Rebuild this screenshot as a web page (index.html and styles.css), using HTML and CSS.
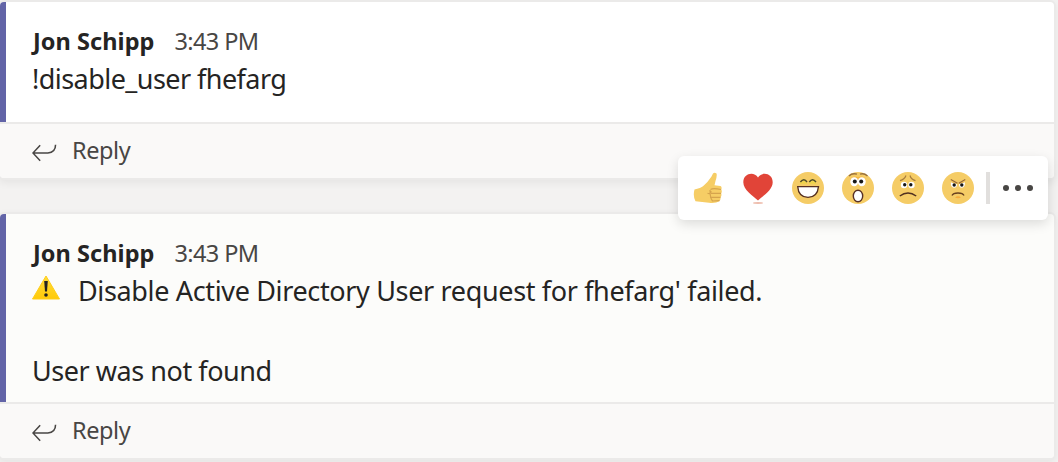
FILE: index.html
```html
<!DOCTYPE html>
<html lang="en">
<head>
<meta charset="utf-8">
<title>Conversation</title>
<link rel="stylesheet" href="styles.css">
</head>
<body>
<main class="thread">
  <article class="card">
    <section class="message">
      <header class="meta"><span class="author">Jon Schipp</span><time class="time">3:43 PM</time></header>
      <p class="line command">!disable_user fhefarg</p>
    </section>
    <footer class="reply">
      <svg class="reply-icon" viewBox="0 0 26 18"><path d="M8.500 1 1 9l7.500 8M1 9h15.500Q24.500 8.500 24.500.5"/></svg>
      <span class="reply-label">Reply</span>
    </footer>
  </article>
  <article class="card card-hover">
    <section class="message">
      <header class="meta"><span class="author">Jon Schipp</span><time class="time">3:43 PM</time></header>
      <p class="line alert">
        <svg class="warning" viewBox="0 0 28 25">
          <defs><linearGradient id="warn" x1="0" y1="0" x2="0" y2="1"><stop offset="0" stop-color="#ffdc3c"/><stop offset="1" stop-color="#ffca08"/></linearGradient></defs>
          <path d="M14 1 27.500 24H.5Z" fill="url(#warn)" stroke="#ffcd18" stroke-linejoin="round"/>
          <path d="M12.200 6h3.600l-.8 10.500h-2Z" fill="#222"/><circle cx="14" cy="20" r="1.800" fill="#222"/>
        </svg>
        <span class="alert-text">Disable Active Directory User request for fhefarg' failed.</span>
      </p>
      <p class="line detail">User was not found</p>
    </section>
    <footer class="reply">
      <svg class="reply-icon" viewBox="0 0 26 18"><path d="M8.500 1 1 9l7.500 8M1 9h15.500Q24.500 8.500 24.500.5"/></svg>
      <span class="reply-label">Reply</span>
    </footer>
  </article>
</main>
<div class="reactions">
  <svg class="emoji" viewBox="0 0 32 32">
    <path d="M2.500 17.500Q8 16.800 11 14.300 16 10 19.500 4.500L21 1.500Q22.500-.2 24.500 1.500 25.300 3.500 23.500 9L22.500 13.300 28.500 14Q30.200 15 29.300 17.500 30.300 19.500 29.200 21.500 30 24 28.400 25.400 29 28 27.200 29.300 24 31.500 17 30.800L3.500 29.300Q.7 24 2.500 17.500Z" fill="#f6cd65"/>
    <path d="M18.500 17.500Q21 15.800 29 17.500M15.500 21.300Q19 22.500 19 19M19 21.300h10M18 25.400h10.500M18 18q0 8 2.500 11l7-.3" fill="none" stroke="#d6a44d" stroke-width="1.200"/>
  </svg>
  <svg class="emoji" viewBox="0 0 32 32">
    <path d="M16 28.500C11 24 1.300 18 1.300 10.300 1.300 1.300 12-.8 16 5.500 20-.8 30.700 1.300 30.700 10.300 30.700 18 21 24 16 28.500Z" fill="#e14438"/>
    <ellipse cx="16" cy="31" rx="5" ry=".9" fill="#eebdad"/>
  </svg>
  <svg class="emoji" viewBox="0 0 32 32">
    <circle cx="16" cy="16" r="16" fill="#f5cc66"/>
    <path d="M8 9Q11.800 4.500 15 9V12H8ZM17 9Q20.500 4.500 24 9V12H17Z" fill="#efd34e"/>
    <path d="M8.400 10Q12 5.500 15 10M17.300 10Q20.500 5.500 24 10" fill="none" stroke="#4f4a2b" stroke-width="1.400"/>
    <path d="M5.700 14.600H26.500Q25.500 25.200 16 25.300 6.500 25.200 5.700 14.600Z" fill="#fff" stroke="#563022" stroke-width="1.300"/>
  </svg>
  <svg class="emoji" viewBox="0 0 32 32">
    <circle cx="16" cy="16" r="16" fill="#f5cc66"/>
    <path d="M8 8Q10 3 16 5 22 3 24 8V12H8Z" fill="#f7b843"/>
    <path d="M7 4Q10 .8 15 2.200M18 2.200Q22 .8 25.500 4" fill="none" stroke="#99703c" stroke-width="1.400"/>
    <ellipse cx="12.200" cy="9.700" rx="4" ry="4.500" fill="#fff"/><ellipse cx="19.800" cy="9.700" rx="4" ry="4.500" fill="#fff"/>
    <circle cx="12.800" cy="9.500" r="2" fill="#171717"/><circle cx="19.200" cy="9.500" r="2" fill="#171717"/>
    <ellipse cx="16" cy="24" rx="4.700" ry="5.800" fill="#fff" stroke="#583127" stroke-width="1.400"/>
  </svg>
  <svg class="emoji" viewBox="0 0 32 32">
    <circle cx="16" cy="16" r="16" fill="#f5cc66"/>
    <path d="M8 8.700Q12.500 7.500 14 3.500M18 3.500Q19 7.500 23.500 8.700" fill="none" stroke="#a77c3f" stroke-width="1.200"/>
    <circle cx="12" cy="13" r="3.200" fill="#fff"/><circle cx="19.500" cy="13" r="3.200" fill="#fff"/>
    <circle cx="12.700" cy="12.800" r="1.700" fill="#171717"/><circle cx="18.800" cy="12.800" r="1.700" fill="#171717"/>
    <path d="M7.800 24Q16 18 24.200 24" fill="none" stroke="#502f20" stroke-width="1.500"/>
  </svg>
  <svg class="emoji" viewBox="0 0 32 32">
    <circle cx="16" cy="16" r="16" fill="#f5cc66"/>
    <path d="M9 10.500Q10.500 9 12 10.500L15.500 12 20 10.500Q21.500 9 23 10.500V12H9Z" fill="#edb94f"/>
    <path d="M8.800 7.500 15.500 11.300M16.800 11.300 23.300 7.500" fill="none" stroke="#966838" stroke-width="1.200"/>
    <path d="M8.800 10.300 15 12.300Q14.800 15.800 12 15.800 8.600 15.500 8.800 10.300ZM17 12.300 23 10.300Q23 15.500 20 15.800 17 15.800 17 12.300Z" fill="#fff"/>
    <circle cx="12.200" cy="13" r="1.700" fill="#171717"/><circle cx="19.800" cy="13" r="1.700" fill="#171717"/>
    <path d="M10 23.500Q11 21 16 21T22 23.500" fill="none" stroke="#68401f" stroke-width="1.300"/>
    <path d="M13 25.500Q16 23 19 25.500 16 27 13 25.500Z" fill="#f5ac3d"/>
  </svg>
  <span class="divider"></span>
  <span class="more"><i class="dot"></i><i class="dot"></i><i class="dot"></i></span>
</div>
</body>
</html>
```

FILE: styles.css
```css
* { box-sizing: border-box; }
body {
  margin: 0;
  height: 462px;
  overflow: hidden;
  background: #f3f2f1;
  color: #252423;
  font-family: "Noto Sans", "Open Sans", sans-serif;
}
.thread {
  width: 1054px;
  padding-top: 2px;
  display: flex;
  flex-direction: column;
  gap: 36px;
}
.card {
  border-radius: 4px;
  background: #fff;
  box-shadow: 0 0 0 2px #ebeae9, 0 3px 8px 2px rgba(0, 0, 0, .06);
}
.card-hover { background: #fcfcfa; }
.message {
  height: 120px;
  padding: 21px 26px 0;
  border-left: 6px solid #6264a7;
  border-top-left-radius: 4px;
}
.card-hover .message { height: 188px; }
.meta {
  height: 37px;
  padding-left: 1px;
  display: flex;
  align-items: flex-start;
  gap: 20px;
  line-height: 36px;
  white-space: nowrap;
}
.author { font-size: 23.500px; font-weight: 700; letter-spacing: .05px; }
.time { font-size: 23.500px; color: #484644; letter-spacing: -.6px; }
.line {
  margin: 0;
  height: 40px;
  line-height: 37px;
  font-size: 27px;
  letter-spacing: -.4px;
  white-space: nowrap;
}
.command { letter-spacing: -.55px; }
.alert { display: flex; letter-spacing: -.35px; }
.warning { width: 28px; height: 25px; margin: 3px 18px 0 0; }
.detail { margin-top: 40px; letter-spacing: -.45px; }
.reply {
  height: 56px;
  padding: 0 32px;
  display: flex;
  align-items: center;
  gap: 15px;
  border-top: 2px solid #ebeae9;
  border-radius: 0 0 4px 4px;
  background: #faf9f8;
  color: #484644;
}
.reply-icon {
  width: 25px;
  height: 18px;
  margin-top: 3px;
  fill: none;
  stroke: #484644;
  stroke-width: 1.600;
}
.reply-label { padding-bottom: 3px; font-size: 23.500px; line-height: 36px; letter-spacing: -.4px; }
.reactions {
  position: absolute;
  left: 678px;
  top: 156px;
  width: 370px;
  height: 64px;
  padding: 0 14px;
  display: flex;
  align-items: center;
  gap: 18px;
  border-radius: 6px;
  background: #fff;
  box-shadow: 0 4px 12px rgba(0, 0, 0, .13);
}
.emoji { width: 32px; height: 32px; flex: none; }
.divider { width: 4px; height: 32px; margin-left: -6px; background: #e1dfdd; }
.more { display: flex; gap: 6px; margin-left: -5px; }
.dot { width: 6px; height: 6px; border-radius: 50%; background: #484644; }
```
